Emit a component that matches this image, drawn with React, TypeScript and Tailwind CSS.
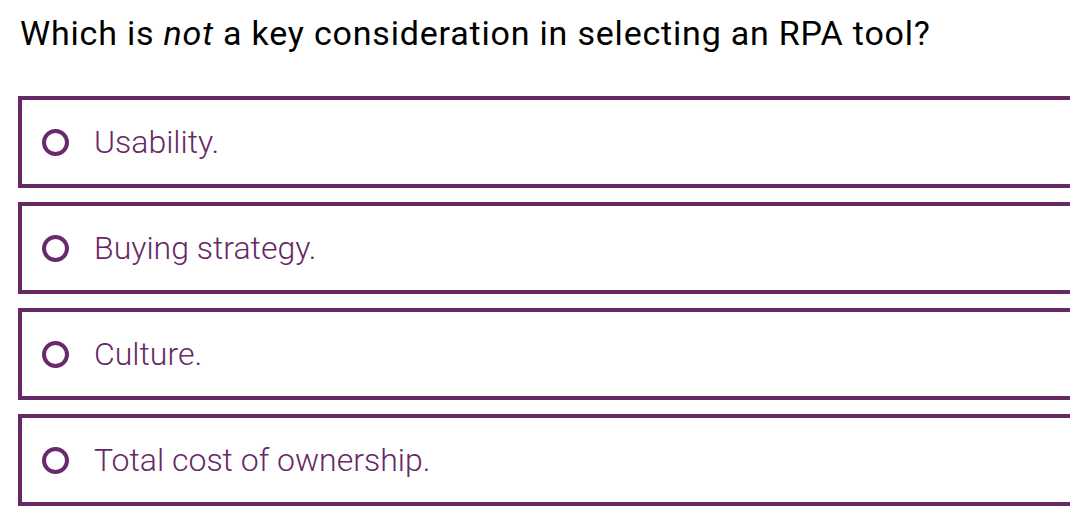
const options = ["Usability.", "Buying strategy.", "Culture.", "Total cost of ownership."];

export default function App() {
  return (
    <div className="w-[1070px] h-[524px] overflow-hidden bg-white" style={{ fontFamily: "Roboto, 'Liberation Sans', sans-serif" }}>
      <h1 className="pl-[20px] pt-[13px] text-[34px] leading-[40px] tracking-[0.8px] text-black font-normal">
        Which is <em>not</em> a key consideration in selecting an RPA tool?
      </h1>
      <div className="mt-[43px] ml-[18px] flex flex-col gap-[14px]">
        {options.map((o) => (
          <div key={o} className="h-[92px] w-[1060px] border-[4px] border-r-0 border-[#662966] flex items-center pl-[20px]">
            <span className="w-[27px] h-[27px] rounded-full border-[4.5px] border-[#68296f] shrink-0" />
            <span className="ml-[25px] text-[32px] font-light text-[#662966]">{o}</span>
          </div>
        ))}
      </div>
    </div>
  );
}
